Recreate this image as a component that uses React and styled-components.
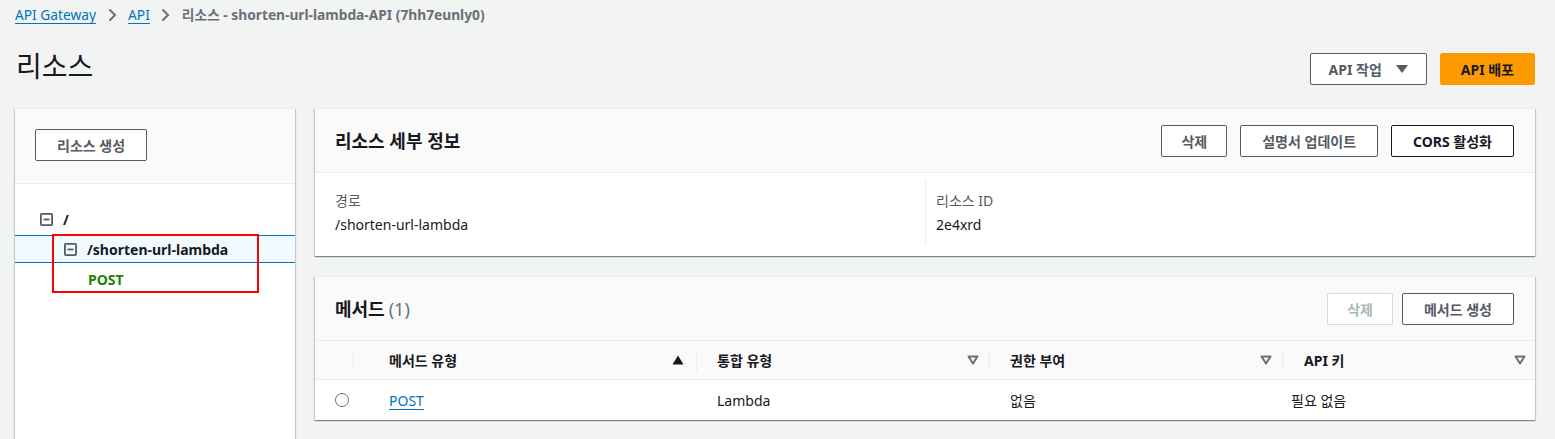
import React from "react";
import styled, { createGlobalStyle } from "styled-components";

const Global = createGlobalStyle`
  html, body { margin: 0; padding: 0; background: #f2f3f3; }
  body {
    font-family: "Noto Sans", "Noto Sans CJK KR", sans-serif;
    font-size: 14px;
    color: #16191f;
  }
  * { box-sizing: border-box; }
`;

const Page = styled.div`
  padding: 0 20px 0 15px;
  height: 439px;
  overflow: hidden;
`;

const Breadcrumbs = styled.nav`
  display: flex;
  align-items: center;
  height: 30px;
  gap: 11.5px;
  font-size: 13.75px;
  line-height: 20px;
`;

const Crumb = styled.a`
  color: #0073bb;
  text-decoration: underline;
  text-underline-offset: 3px;
  text-decoration-thickness: 1px;
`;

const Current = styled.span`
  color: #687078;
  font-weight: 700;
`;

const Chevron = () => (
  <svg width="9" height="14" viewBox="0 0 9 14">
    <polyline points="1.5,1.5 7,7 1.5,12.5" fill="none" stroke="#687078" strokeWidth="2" />
  </svg>
);

const HeaderRow = styled.div`
  display: flex;
  justify-content: space-between;
  align-items: flex-start;
  margin-top: 18px;
`;

const Title = styled.h1`
  margin: 0 0 0 1px;
  font-size: 28px;
  line-height: 36px;
  font-weight: 400;
  color: #16191f;
`;

const ButtonGroup = styled.div`
  display: flex;
  align-items: center;
  gap: ${(p) => p.$gap ?? 13}px;
  margin-top: ${(p) => p.$top ?? 0}px;
`;

const Button = styled.button`
  height: 32px;
  padding: 0 ${(p) => p.$pad ?? 19}px;
  border-radius: 2px;
  font-family: inherit;
  font-size: 14px;
  font-weight: 700;
  display: inline-flex;
  align-items: center;
  gap: 14px;
  cursor: pointer;
  background: ${(p) => (p.$variant === "primary" ? "#ff9900" : "#ffffff")};
  color: ${(p) =>
    p.$variant === "primary" || p.$variant === "dark"
      ? "#16191f"
      : p.$variant === "disabled"
      ? "#aab7b8"
      : "#545b64"};
  border: 1px solid
    ${(p) =>
      p.$variant === "primary"
        ? "#ff9900"
        : p.$variant === "dark"
        ? "#16191f"
        : p.$variant === "disabled"
        ? "#d5dbdb"
        : "#545b64"};
`;

const Caret = () => (
  <svg width="12" height="9" viewBox="0 0 12 9">
    <polygon points="0,0 12,0 6,8" fill="#545b64" />
  </svg>
);

const Layout = styled.div`
  display: grid;
  grid-template-columns: 280px 1fr;
  gap: 20px;
  margin-top: 23px;
`;

const panelShadow = `
  border-top: 1px solid #eaeded;
  box-shadow: 0 1px 1px 0 rgba(0, 28, 36, 0.3), 1px 1px 1px 0 rgba(0, 28, 36, 0.15),
    -1px 1px 1px 0 rgba(0, 28, 36, 0.15);
`;

const SidePanel = styled.aside`
  position: relative;
  background: #ffffff;
  height: 360px;
  ${panelShadow}
`;

const SideHeader = styled.div`
  background: #fafafa;
  padding: 20px 20px 0 20px;
  height: 75px;
  border-bottom: 1px solid #eaeded;
`;

const Tree = styled.div`
  padding-top: 22px;
  display: flex;
  flex-direction: column;
`;

const TreeRow = styled.div`
  display: flex;
  align-items: center;
  gap: 10px;
  height: ${(p) => p.$h}px;
  padding-left: ${(p) => p.$indent}px;
  font-weight: 700;
  font-size: 14px;
  margin-bottom: ${(p) => p.$mb ?? 0}px;
  color: ${(p) => (p.$method ? "#1d8102" : "#16191f")};
  background: ${(p) => (p.$selected ? "#f1faff" : "transparent")};
  border-top: ${(p) => (p.$selected ? "1px solid #0073bb" : "none")};
  border-bottom: ${(p) => (p.$selected ? "1px solid #0073bb" : "none")};
`;

const Minus = () => (
  <svg width="13" height="13" viewBox="0 0 13 13">
    <rect x="0.9" y="0.9" width="11.2" height="11.2" rx="1" fill="none" stroke="#545b64" strokeWidth="1.8" />
    <line x1="3.5" y1="6.5" x2="9.5" y2="6.5" stroke="#545b64" strokeWidth="1.8" />
  </svg>
);

const Highlight = styled.div`
  position: absolute;
  left: 37px;
  top: 125px;
  width: 207px;
  height: 59px;
  border: 2px solid #ff0000;
  pointer-events: none;
`;

const Main = styled.div`
  display: flex;
  flex-direction: column;
  gap: 20px;
`;

const Panel = styled.section`
  background: #ffffff;
  ${panelShadow}
`;

const PanelHeader = styled.div`
  display: flex;
  align-items: center;
  justify-content: space-between;
  height: 64px;
  padding: 0 21px 0 20px;
  background: #fafafa;
  border-bottom: 1px solid #eaeded;
`;

const PanelTitle = styled.h2`
  margin: 0;
  font-size: 18px;
  font-weight: 700;
  line-height: 24px;
  color: #16191f;
`;

const Count = styled.span`
  font-weight: 400;
  color: #687078;
  margin-left: 4px;
`;

const Columns = styled.div`
  display: grid;
  grid-template-columns: 1fr 1fr;
  padding: 7px 0 11px;
`;

const Column = styled.div`
  padding: 11px 20px 10px ${(p) => (p.$divided ? 10 : 20)}px;
  border-left: ${(p) => (p.$divided ? "1px solid #eaeded" : "none")};
  display: flex;
  flex-direction: column;
  gap: 4px;
`;

const Label = styled.div`
  color: #545b64;
  line-height: 20px;
`;

const Value = styled.div`
  color: #16191f;
  line-height: 20px;
`;

const Table = styled.div`
  display: grid;
  grid-template-columns: 39px 343px 293px 293px 1fr;
`;

const HeadCell = styled.div`
  position: relative;
  display: flex;
  align-items: center;
  justify-content: space-between;
  height: 39px;
  padding: 0 ${(p) => p.$pr ?? 11}px 0 ${(p) => p.$pl ?? 20}px;
  background: #fafafa;
  border-bottom: 1px solid #eaeded;
  font-weight: 700;
  color: #16191f;
  &::after {
    content: "";
    display: ${(p) => (p.$last ? "none" : "block")};
    position: absolute;
    right: 0;
    top: 9px;
    height: 21px;
    width: 1px;
    background: #eaeded;
  }
`;

const Cell = styled.div`
  display: flex;
  align-items: center;
  height: 40px;
  padding-left: ${(p) => p.$pl ?? 20}px;
  color: #16191f;
`;

const Radio = styled.span`
  width: 14px;
  height: 14px;
  border: 1.5px solid #687078;
  border-radius: 50%;
  background: #fff;
`;

const Link = styled.a`
  color: #0073bb;
  text-decoration: underline;
  text-underline-offset: 3px;
`;

const SortAsc = () => (
  <svg width="12" height="10" viewBox="0 0 12 10">
    <polygon points="6,0.5 11.5,9.5 0.5,9.5" fill="#16191f" />
  </svg>
);

const SortNone = () => (
  <svg width="12" height="10" viewBox="0 0 12 10">
    <polygon points="1.5,1.5 10.5,1.5 6,8.5" fill="none" stroke="#687078" strokeWidth="2" strokeLinejoin="round" />
  </svg>
);

export default function App() {
  return (
    <>
      <Global />
      <Page>
        <Breadcrumbs>
          <Crumb>API Gateway</Crumb>
          <Chevron />
          <Crumb>API</Crumb>
          <Chevron />
          <Current>리소스 - shorten-url-lambda-API (7hh7eunly0)</Current>
        </Breadcrumbs>

        <HeaderRow>
          <Title>리소스</Title>
          <ButtonGroup $top={5}>
            <Button $pad={18}>
              API 작업 <Caret />
            </Button>
            <Button $variant="primary" $pad={20}>API 배포</Button>
          </ButtonGroup>
        </HeaderRow>

        <Layout>
          <SidePanel>
            <SideHeader>
              <Button $pad={21}>리소스 생성</Button>
            </SideHeader>
            <Tree>
              <TreeRow $h={26} $indent={25} $mb={3}>
                <Minus />/
              </TreeRow>
              <TreeRow $h={28} $indent={49} $selected>
                <Minus />/shorten-url-lambda
              </TreeRow>
              <TreeRow $h={32} $indent={73} $method>
                POST
              </TreeRow>
            </Tree>
            <Highlight />
          </SidePanel>

          <Main>
            <Panel>
              <PanelHeader>
                <PanelTitle>리소스 세부 정보</PanelTitle>
                <ButtonGroup>
                  <Button>삭제</Button>
                  <Button $pad={21}>설명서 업데이트</Button>
                  <Button $variant="dark" $pad={21}>CORS 활성화</Button>
                </ButtonGroup>
              </PanelHeader>
              <Columns>
                <Column>
                  <Label>경로</Label>
                  <Value>/shorten-url-lambda</Value>
                </Column>
                <Column $divided>
                  <Label>리소스 ID</Label>
                  <Value>2e4xrd</Value>
                </Column>
              </Columns>
            </Panel>

            <Panel>
              <PanelHeader>
                <PanelTitle>
                  메서드<Count>(1)</Count>
                </PanelTitle>
                <ButtonGroup $gap={9}>
                  <Button $variant="disabled">삭제</Button>
                  <Button $pad={21}>메서드 생성</Button>
                </ButtonGroup>
              </PanelHeader>
              <Table>
                <HeadCell />
                <HeadCell $pl={35} $pr={13}>
                  메서드 유형 <SortAsc />
                </HeadCell>
                <HeadCell>
                  통합 유형 <SortNone />
                </HeadCell>
                <HeadCell>
                  권한 부여 <SortNone />
                </HeadCell>
                <HeadCell $pl={21} $pr={9} $last>
                  API 키 <SortNone />
                </HeadCell>

                <Cell>
                  <Radio />
                </Cell>
                <Cell $pl={35}>
                  <Link>POST</Link>
                </Cell>
                <Cell>Lambda</Cell>
                <Cell>없음</Cell>
                <Cell $pl={8}>필요 없음</Cell>
              </Table>
            </Panel>
          </Main>
        </Layout>
      </Page>
    </>
  );
}
